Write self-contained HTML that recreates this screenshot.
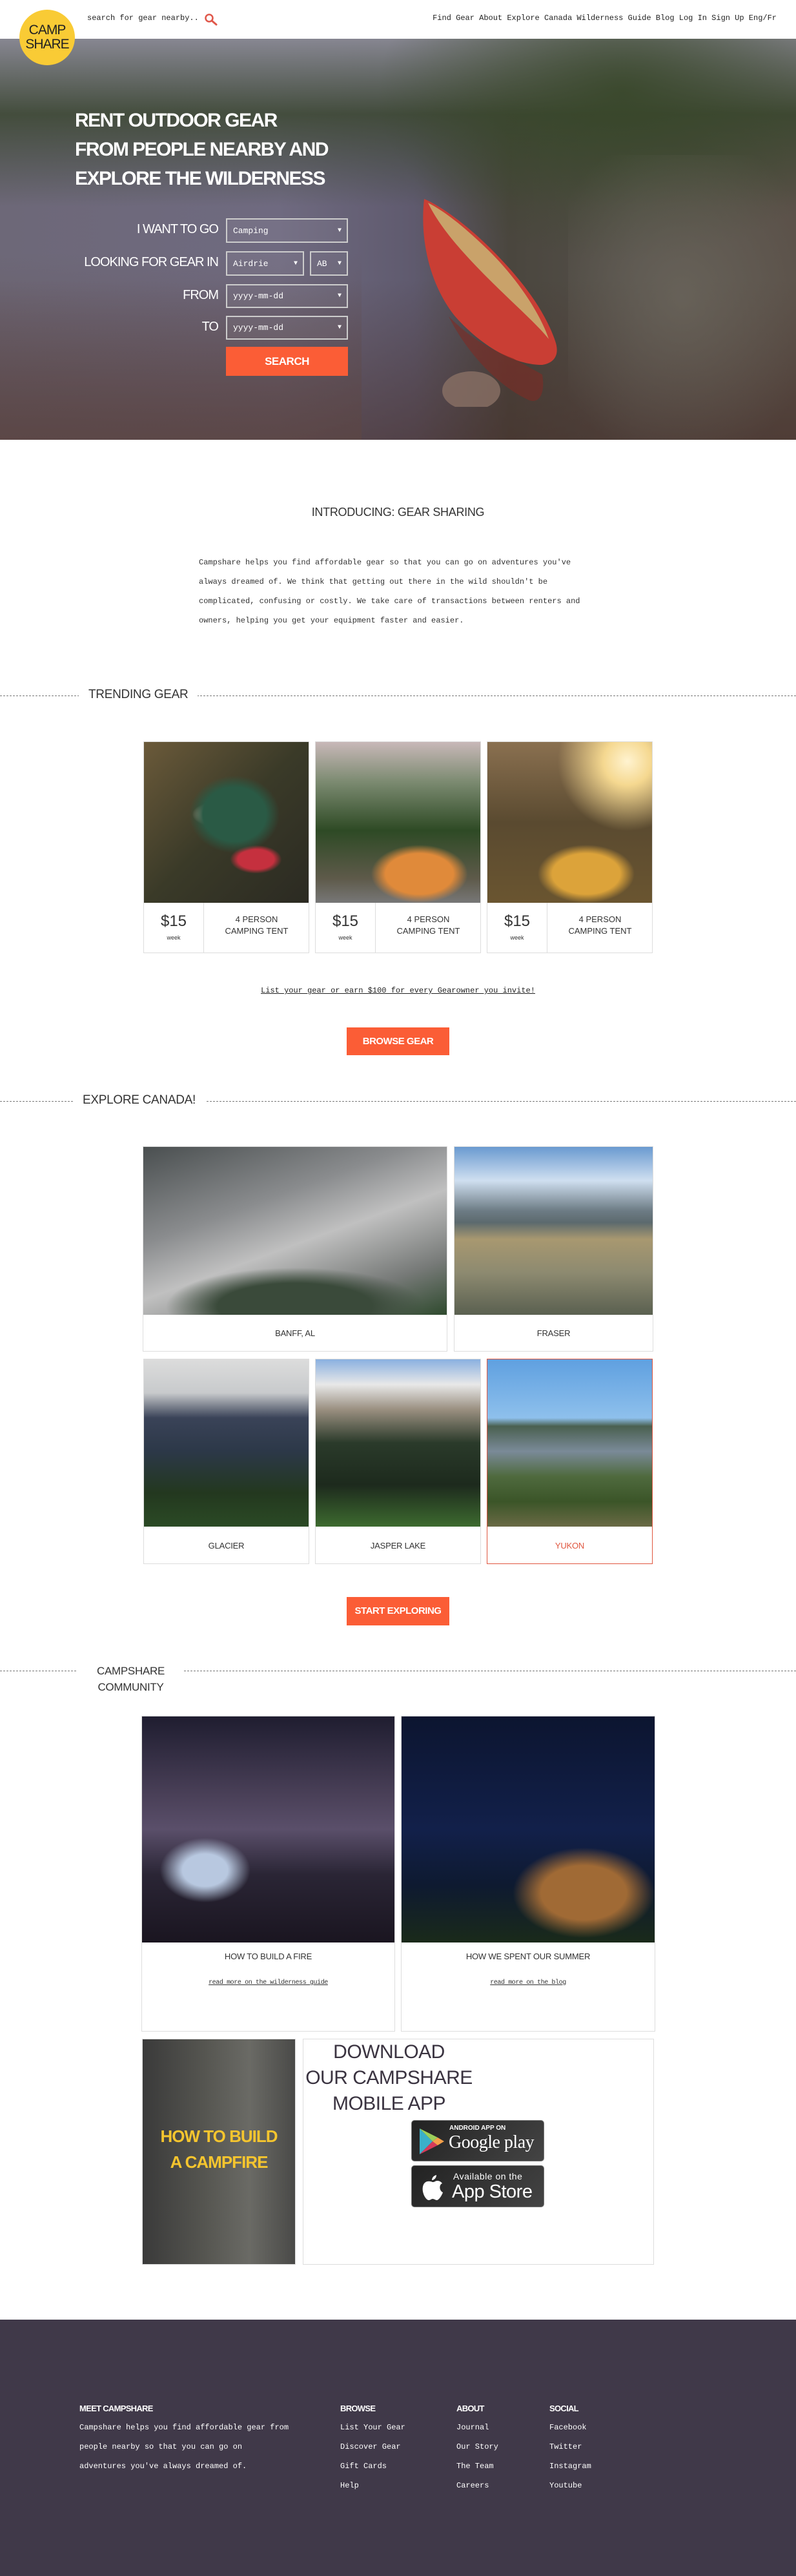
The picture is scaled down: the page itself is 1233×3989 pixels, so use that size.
<!DOCTYPE html>
<html><head><meta charset="utf-8">
<style>
*{margin:0;padding:0;box-sizing:border-box}
body{width:1233px;height:3989px;position:relative;background:#fff;font-family:"Liberation Sans",sans-serif;color:#333;overflow:hidden}
.a{position:absolute}
.mono{font-family:"Liberation Mono",monospace}
.head{font-family:"Liberation Sans",sans-serif;color:#333;text-transform:uppercase;letter-spacing:-0.3px}
.dash{position:absolute;left:0;width:1233px;border-top:1px dashed #777}
.btn{position:absolute;background:#fb5d36;color:#fff;font-weight:bold;font-size:15px;text-align:center;letter-spacing:-0.5px}
.card{position:absolute;border:1px solid #ddd;background:#fff}
.img{position:absolute;left:0;top:0;right:0}
.lbl{position:absolute;left:0;right:0;text-align:center;font-size:13px;color:#333;letter-spacing:-0.2px}
.inp{position:absolute;border:2px solid #ccc;color:#fff;font-family:"Liberation Mono",monospace;font-size:13px;padding-left:9px;display:flex;align-items:center;background:rgba(255,255,255,0.05)}
.inp span{position:absolute;right:8px;font-size:10px}
.flab{position:absolute;right:895px;color:#fff;font-size:20px;text-align:right;letter-spacing:-1px;white-space:nowrap}
.fh{position:absolute;top:3722px;color:#fff;font-weight:bold;font-size:13px;letter-spacing:-0.7px}
.fl{position:absolute;color:#fff;font-family:"Liberation Mono",monospace;font-size:12px;line-height:30px}
</style></head><body>

<!-- header -->
<div class="a" style="left:0;top:0;width:1233px;height:60px;background:#fff"></div>
<div class="a mono" style="left:135px;top:21px;font-size:12px;color:#222">search for gear nearby..</div>
<svg class="a" style="left:316px;top:20px" width="22" height="20" viewBox="0 0 22 20"><circle cx="8" cy="8" r="5.5" fill="none" stroke="#e0574a" stroke-width="2.5"/><line x1="12" y1="12" x2="19" y2="18" stroke="#e0574a" stroke-width="3" stroke-linecap="round"/></svg>
<div class="a mono" style="right:30px;top:21px;font-size:12px;color:#222">Find Gear About Explore Canada Wilderness Guide Blog Log In Sign Up Eng/Fr</div>

<!-- hero -->
<div class="a" style="left:0;top:60px;width:1233px;height:621px;overflow:hidden;background:
linear-gradient(180deg,rgba(0,0,0,0) 0%,rgba(0,0,0,0) 60%,rgba(70,45,40,0.55) 100%),
linear-gradient(90deg,#6d6878 0%,#6f6a80 35%,#5f5a6e 52%,#4a463e 64%,#55504a 80%,#5a5048 100%);">
 <div class="a" style="left:0;top:0;width:1233px;height:260px;background:linear-gradient(180deg,rgba(138,138,148,0.9) 0%,rgba(60,72,50,0.85) 45%,rgba(80,80,95,0) 100%)"></div>
 <div class="a" style="left:560px;top:0;width:673px;height:420px;background:radial-gradient(ellipse 380px 260px at 60% 20%,rgba(55,70,40,0.85) 0%,rgba(55,70,40,0) 100%)"></div>
 <div class="a" style="left:880px;top:180px;width:353px;height:441px;background:radial-gradient(ellipse 220px 260px at 50% 50%,rgba(110,105,95,0.7) 0%,rgba(110,105,95,0) 100%)"></div>
 <div class="a" style="left:0;top:330px;width:560px;height:291px;background:linear-gradient(180deg,rgba(90,80,110,0) 0%,rgba(95,70,65,0.5) 100%)"></div>
</div>
<!-- canoe -->
<svg class="a" style="left:645px;top:300px" width="230" height="330" viewBox="0 0 230 330"><path d="M12 8 C5 70 20 140 60 190 C100 235 150 265 195 265 C215 262 222 248 215 228 C195 170 150 120 115 85 C80 50 40 20 12 8Z" fill="#c93e34"/><path d="M18 14 C35 50 70 90 110 130 C150 170 185 200 205 225 C190 180 150 125 112 88 C75 52 45 28 18 14Z" fill="#c9a26a"/><path d="M50 190 C80 250 130 300 175 320 C190 325 200 310 195 280 L150 255 C110 240 80 220 50 190Z" fill="#7e2b25" opacity=".6"/><ellipse cx="85" cy="305" rx="45" ry="30" fill="#8a7065" opacity=".8"/></svg>
<div class="a" style="left:116px;top:164px;color:#fff;font-size:30px;font-weight:bold;line-height:45px;letter-spacing:-1.5px;width:600px">RENT OUTDOOR GEAR<br>FROM PEOPLE NEARBY AND<br>EXPLORE THE WILDERNESS</div>

<div class="flab" style="top:344px">I WANT TO GO</div>
<div class="flab" style="top:395px">LOOKING FOR GEAR IN</div>
<div class="flab" style="top:446px">FROM</div>
<div class="flab" style="top:495px">TO</div>
<div class="inp" style="left:350px;top:338px;width:189px;height:38px">Camping<span>▼</span></div>
<div class="inp" style="left:350px;top:389px;width:121px;height:38px">Airdrie<span>▼</span></div>
<div class="inp" style="left:480px;top:389px;width:59px;height:38px">AB<span>▼</span></div>
<div class="inp" style="left:350px;top:440px;width:189px;height:37px">yyyy-mm-dd<span>▼</span></div>
<div class="inp" style="left:350px;top:489px;width:189px;height:37px">yyyy-mm-dd<span>▼</span></div>
<div class="btn" style="left:350px;top:537px;width:189px;height:45px;line-height:45px;font-size:17px">SEARCH</div>

<!-- logo -->
<div class="a" style="left:30px;top:15px;width:86px;height:86px;border-radius:50%;background:#f9cb35;text-align:center;color:#222;font-size:21px;line-height:22px;padding-top:21px;letter-spacing:-1px">CAMP<br>SHARE</div>

<!-- intro -->
<div class="a head" style="left:0;width:1233px;top:783px;text-align:center;font-size:18px">INTRODUCING: GEAR SHARING</div>
<div class="a mono" style="left:308px;top:856px;width:605px;font-size:12px;line-height:30px;color:#333">Campshare helps you find affordable gear so that you can go on adventures you've always dreamed of. We think that getting out there in the wild shouldn't be complicated, confusing or costly. We take care of transactions between renters and owners, helping you get your equipment faster and easier.</div>

<!-- trending -->
<div class="dash" style="top:1077px"></div>
<div class="a head" style="left:122px;top:1065px;background:#fff;padding:0 15px;font-size:19px">TRENDING GEAR</div>

<div class="card" style="left:222px;top:1148px;width:257px;height:328px">
 <div class="img" style="height:249px;background:radial-gradient(ellipse 70px 60px at 55% 45%,#2a5a45 0 70%,transparent 100%),radial-gradient(ellipse 40px 22px at 68% 73%,#c5303e 0 70%,transparent 100%),radial-gradient(ellipse 40px 20px at 45% 45%,#d8b0a0 0 60%,transparent 100%),linear-gradient(135deg,#6b5a3a,#3a3a28 50%,#2b2a22)"></div>
 <div class="a" style="left:92px;top:249px;width:1px;height:78px;background:#ddd"></div>
 <div class="a" style="left:0;top:264px;width:92px;text-align:center;font-size:24px;color:#333">$15</div>
 <div class="a" style="left:0;top:298px;width:92px;text-align:center;font-size:9px;color:#333">week</div>
 <div class="a" style="left:93px;top:266px;width:163px;text-align:center;font-size:13px;line-height:18px">4 PERSON<br>CAMPING TENT</div>
</div>
<div class="card" style="left:488px;top:1148px;width:257px;height:328px">
 <div class="img" style="height:249px;background:radial-gradient(ellipse 75px 45px at 63% 82%,#e08a3a 0 70%,transparent 100%),linear-gradient(180deg,#c8b8b8 0%,#7b8a70 25%,#2e4a25 55%,#5e5a4a 85%,#777 100%)"></div>
 <div class="a" style="left:92px;top:249px;width:1px;height:78px;background:#ddd"></div>
 <div class="a" style="left:0;top:264px;width:92px;text-align:center;font-size:24px;color:#333">$15</div>
 <div class="a" style="left:0;top:298px;width:92px;text-align:center;font-size:9px;color:#333">week</div>
 <div class="a" style="left:93px;top:266px;width:163px;text-align:center;font-size:13px;line-height:18px">4 PERSON<br>CAMPING TENT</div>
</div>
<div class="card" style="left:754px;top:1148px;width:257px;height:328px">
 <div class="img" style="height:249px;background:radial-gradient(circle at 85% 12%,#fff3d0 0,#f5d890 12%,transparent 35%),radial-gradient(ellipse 75px 45px at 60% 82%,#dca33a 0 70%,transparent 100%),linear-gradient(180deg,#8a7050 0%,#5a4a30 50%,#6a5530 100%)"></div>
 <div class="a" style="left:92px;top:249px;width:1px;height:78px;background:#ddd"></div>
 <div class="a" style="left:0;top:264px;width:92px;text-align:center;font-size:24px;color:#333">$15</div>
 <div class="a" style="left:0;top:298px;width:92px;text-align:center;font-size:9px;color:#333">week</div>
 <div class="a" style="left:93px;top:266px;width:163px;text-align:center;font-size:13px;line-height:18px">4 PERSON<br>CAMPING TENT</div>
</div>

<div class="a mono" style="left:0;width:1233px;top:1527px;text-align:center;font-size:12px;color:#222;text-decoration:underline">List your gear or earn $100 for every Gearowner you invite!</div>
<div class="btn" style="left:537px;top:1591px;width:159px;height:43px;line-height:43px">BROWSE GEAR</div>

<!-- explore -->
<div class="dash" style="top:1705px"></div>
<div class="a head" style="left:113px;top:1693px;background:#fff;padding:0 15px;font-size:19px">EXPLORE CANADA!</div>

<div class="card" style="left:221px;top:1775px;width:472px;height:318px">
 <div class="img" style="height:260px;background:radial-gradient(ellipse 200px 60px at 50% 95%,#3a4a3a 0 60%,transparent 100%),linear-gradient(160deg,#4a4f50 0%,#8a8c8e 35%,#c0c0c0 55%,#777a78 80%,#2f4a2e 100%)"></div>
 <div class="lbl" style="top:281px">BANFF, AL</div>
</div>
<div class="card" style="left:703px;top:1775px;width:309px;height:318px">
 <div class="img" style="height:260px;background:linear-gradient(180deg,#6a9ad0 0%,#cfdff0 20%,#6d7c85 38%,#5c6a6e 45%,#a89870 55%,#8d8a70 75%,#5a6050 100%)"></div>
 <div class="lbl" style="top:281px">FRASER</div>
</div>
<div class="card" style="left:222px;top:2104px;width:257px;height:318px">
 <div class="img" style="height:259px;background:linear-gradient(180deg,#dcdcdc 0%,#c8cacc 20%,#3a4358 35%,#2c3848 55%,#23381f 80%,#2b4a25 100%)"></div>
 <div class="lbl" style="top:281px">GLACIER</div>
</div>
<div class="card" style="left:488px;top:2104px;width:257px;height:318px">
 <div class="img" style="height:259px;background:linear-gradient(180deg,#8ab0e0 0%,#e8e8e8 15%,#9a8f80 30%,#2a3a2a 50%,#1d2a1d 75%,#3d6a2f 100%)"></div>
 <div class="lbl" style="top:281px">JASPER LAKE</div>
</div>
<div class="card" style="left:754px;top:2104px;width:257px;height:318px;border-color:#e0563f">
 <div class="img" style="height:259px;background:linear-gradient(180deg,#5fa0e0 0%,#8ec0ec 35%,#4a6050 40%,#7a8a98 55%,#4f6a3e 70%,#3b5528 85%,#6a6a45 100%)"></div>
 <div class="lbl" style="top:281px;color:#e0563f">YUKON</div>
</div>
<div class="btn" style="left:537px;top:2473px;width:159px;height:44px;line-height:44px">START EXPLORING</div>

<!-- community -->
<div class="dash" style="top:2587px"></div>
<div class="a head" style="left:120px;top:2575px;background:#fff;padding:0 30px;font-size:17px;text-align:center;line-height:25px">CAMPSHARE<br>COMMUNITY</div>

<div class="card" style="left:219px;top:2657px;width:393px;height:489px">
 <div class="img" style="height:350px;background:radial-gradient(ellipse 70px 50px at 25% 68%,#b8c8e0 0 50%,transparent 100%),linear-gradient(180deg,#1f1d30 0%,#4a4058 35%,#5a4f6a 50%,#2a2535 70%,#1a1520 100%)"></div>
 <div class="lbl" style="top:364px">HOW TO BUILD A FIRE</div>
 <div class="lbl mono" style="top:407px;font-size:10px;text-decoration:underline;letter-spacing:-0.4px">read more on the wilderness guide</div>
</div>
<div class="card" style="left:621px;top:2657px;width:394px;height:489px">
 <div class="img" style="height:350px;background:radial-gradient(ellipse 110px 70px at 72% 78%,#a06a35 0 60%,transparent 100%),linear-gradient(180deg,#0c1530 0%,#12204a 50%,#0e1a30 75%,#1a2a1a 100%)"></div>
 <div class="lbl" style="top:364px">HOW WE SPENT OUR SUMMER</div>
 <div class="lbl mono" style="top:407px;font-size:10px;text-decoration:underline;letter-spacing:-0.4px">read more on the blog</div>
</div>

<div class="a" style="left:220px;top:3157px;width:238px;height:350px;background:linear-gradient(90deg,#3a3a3a,#555550 40%,#6a6a65 70%,#4a4a48);border:1px solid #ddd"></div>
<div class="a" style="left:220px;top:3288px;width:238px;text-align:center;color:#f5c52e;font-size:26px;font-weight:bold;line-height:40px;letter-spacing:-1px">HOW TO BUILD<br>A CAMPFIRE</div>

<div class="card" style="left:469px;top:3157px;width:544px;height:350px"></div>
<div class="a" style="left:470px;top:3158px;width:265px;text-align:center;color:#3a3340;font-size:30px;line-height:40px;letter-spacing:-0.5px">DOWNLOAD<br>OUR CAMPSHARE<br>MOBILE APP</div>
<div class="a" style="left:637px;top:3283px;width:206px;height:64px;border-radius:5px;background:linear-gradient(135deg,#222,#444);border:1px solid #777">
 <svg class="a" style="left:10px;top:10px" width="42" height="44" viewBox="0 0 42 44"><path d="M2 2 L22 22 L2 42Z" fill="#3bb0c9"/><path d="M2 2 L30 16 L22 22Z" fill="#9ccf5a"/><path d="M2 42 L30 28 L22 22Z" fill="#d63a5a"/><path d="M30 16 L40 22 L30 28 L22 22Z" fill="#f5a04a"/></svg>
 <div class="a" style="left:58px;top:6px;color:#fff;font-size:10px;font-weight:bold">ANDROID APP ON</div>
 <div class="a" style="left:57px;top:18px;color:#fff;font-size:28px;font-family:'Liberation Serif',serif;letter-spacing:-0.5px">Google play</div>
</div>
<div class="a" style="left:637px;top:3353px;width:206px;height:65px;border-radius:5px;background:linear-gradient(135deg,#222,#444);border:1px solid #777">
 <svg class="a" style="left:14px;top:12px" width="36" height="42" viewBox="0 0 36 42"><path d="M24 2 C24 7 20 10 17 10 C17 6 20 3 24 2Z" fill="#fff"/><path d="M18 13 C14 11 5 10 3 20 C1 30 8 41 12 41 C15 41 16 39 18 39 C21 39 22 41 25 41 C29 40 33 32 34 29 C28 26 28 17 33 15 C30 11 25 10 22 12 C20 13 19 13 18 13Z" fill="#fff"/></svg>
 <div class="a" style="left:64px;top:8px;color:#fff;font-size:14px;letter-spacing:0.5px">Available on the</div>
 <div class="a" style="left:62px;top:24px;color:#fff;font-size:29px;letter-spacing:-0.5px">App Store</div>
</div>

<!-- footer -->
<div class="a" style="left:0;top:3592px;width:1233px;height:397px;background:#403949"></div>
<div class="fh" style="left:123px">MEET CAMPSHARE</div>
<div class="fh" style="left:527px">BROWSE</div>
<div class="fh" style="left:707px">ABOUT</div>
<div class="fh" style="left:851px">SOCIAL</div>
<div class="fl" style="left:123px;top:3744px;width:350px">Campshare helps you find affordable gear from<br>people nearby so that you can go on<br>adventures you've always dreamed of.</div>
<div class="fl" style="left:527px;top:3744px">List Your Gear<br>Discover Gear<br>Gift Cards<br>Help</div>
<div class="fl" style="left:707px;top:3744px">Journal<br>Our Story<br>The Team<br>Careers</div>
<div class="fl" style="left:851px;top:3744px">Facebook<br>Twitter<br>Instagram<br>Youtube</div>

</body></html>
